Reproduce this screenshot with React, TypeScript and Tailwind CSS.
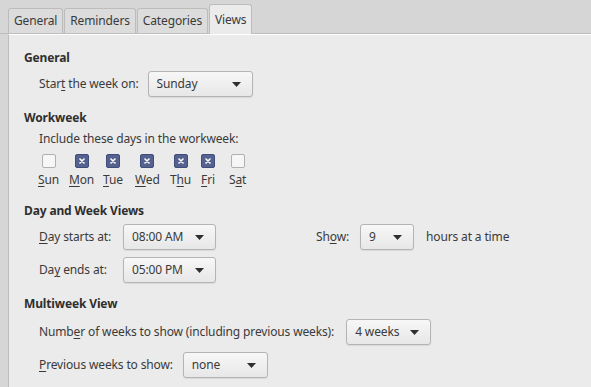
import type { ReactNode } from "react";

const DAYS: { key: string; pre: string; u: string; post: string; checked: boolean }[] = [
  { key: "sun", pre: "", u: "S", post: "un", checked: false },
  { key: "mon", pre: "", u: "M", post: "on", checked: true },
  { key: "tue", pre: "", u: "T", post: "ue", checked: true },
  { key: "wed", pre: "", u: "W", post: "ed", checked: true },
  { key: "thu", pre: "T", u: "h", post: "u", checked: true },
  { key: "fri", pre: "", u: "F", post: "ri", checked: true },
  { key: "sat", pre: "S", u: "a", post: "t", checked: false },
];

function Mn({ children }: { children: ReactNode }) {
  return <span className="underline decoration-1 underline-offset-2">{children}</span>;
}

function Dropdown({ value, width }: { value: string; width: string }) {
  return (
    <div
      className={`flex h-[26px] ${width} items-center justify-between rounded-[3px] border border-[#b4b4b4] bg-gradient-to-b from-[#f7f7f7] to-[#e7e7e7] pl-[8px] pr-[11px] shadow-[0_1px_1px_rgba(0,0,0,0.08)]`}
    >
      <span>{value}</span>
      <svg width="9" height="5" viewBox="0 0 9 5">
        <path d="M0 0H9L4.5 5Z" fill="#2e2e2e" />
      </svg>
    </div>
  );
}

function Checkbox({ checked }: { checked: boolean }) {
  if (!checked) {
    return <div className="h-[14px] w-[14px] rounded-[2px] border border-[#b0b0b0] bg-[#f6f6f6]" />;
  }
  return (
    <div className="flex h-[14px] w-[14px] items-center justify-center rounded-[2px] border border-[#3f4d7a] bg-[#55628f]">
      <svg width="6" height="6" viewBox="0 0 6 6">
        <path d="M1 1L5 5M5 1L1 5" stroke="#fff" strokeWidth="1.6" strokeLinecap="round" />
      </svg>
    </div>
  );
}

function Tab({ label, active }: { label: string; active?: boolean }) {
  if (active) {
    return (
      <div className="relative -mb-px flex h-[30px] items-center rounded-t-[3px] border border-b-0 border-[#bcbcbc] bg-[#ebebeb] px-[5px]">
        {label}
      </div>
    );
  }
  return (
    <div className="flex h-[25px] items-center rounded-t-[3px] border border-b-0 border-[#bcbcbc] bg-[#dcdcdc] px-[5px]">
      {label}
    </div>
  );
}

function Header({ children, className }: { children: ReactNode; className?: string }) {
  return <div className={`font-bold text-[#2f2f2f] ${className ?? ""}`}>{children}</div>;
}

export default function App() {
  return (
    <div
      className="flex h-[387px] w-[591px] flex-col overflow-hidden bg-[#d6d6d6] text-[12px] leading-[18px] tracking-[-0.14px] text-[#3a3a3a]"
      style={{ fontFamily: '"Noto Sans", "Open Sans", sans-serif' }}
    >
      <div className="flex h-[34px] shrink-0 items-end gap-[1px] border-b border-[#bdbdbd] pl-[8px]">
        <Tab label="General" />
        <Tab label="Reminders" />
        <Tab label="Categories" />
        <Tab label="Views" active />
      </div>
      <div className="ml-[8px] flex-1 border-l border-t border-l-[#bdbdbd] border-t-white bg-[#ebebeb] pl-[15px] pt-[14px]">
        <Header>General</Header>
        <div className="mt-[4px] flex items-center gap-[9px] pl-[15px]">
          <span>
            Star<Mn>t</Mn> the week on:
          </span>
          <Dropdown value="Sunday" width="w-[105px]" />
        </div>

        <Header className="mt-[12px]">Workweek</Header>
        <div className="mt-[3px] pl-[15px]">Include these days in the workweek:</div>
        <div className="mt-[6px] grid grid-cols-[31px_34px_32px_35px_31px_28px_22px] pl-[14px]">
          {DAYS.map((d) => (
            <div key={d.key} className="flex flex-col items-center gap-[3px] justify-self-start">
              <Checkbox checked={d.checked} />
              <span>
                {d.pre}
                <Mn>{d.u}</Mn>
                {d.post}
              </span>
            </div>
          ))}
        </div>

        <Header className="mt-[13px]">Day and Week Views</Header>
        <div className="mt-[4px] grid grid-cols-[84px_93px_100px_44px_54px_auto] items-center gap-y-[7px] pl-[15px]">
          <span>
            <Mn>D</Mn>ay starts at:
          </span>
          <Dropdown value="08:00 AM" width="w-[93px]" />
          <div />
          <span>
            Sh<Mn>o</Mn>w:
          </span>
          <Dropdown value="9" width="w-[54px]" />
          <span className="pl-[12px]">hours at a time</span>
          <span>
            Da<Mn>y</Mn> ends at:
          </span>
          <Dropdown value="05:00 PM" width="w-[93px]" />
        </div>

        <Header className="mt-[12px]">Multiweek View</Header>
        <div className="mt-[6px] flex items-center gap-[12px] pl-[15px]">
          <span>
            Numb<Mn>e</Mn>r of weeks to show (including previous weeks):
          </span>
          <Dropdown value="4 weeks" width="w-[85px]" />
        </div>
        <div className="mt-[7px] flex items-center gap-[10px] pl-[15px]">
          <span>
            <Mn>P</Mn>revious weeks to show:
          </span>
          <Dropdown value="none" width="w-[85px]" />
        </div>
      </div>
    </div>
  );
}
